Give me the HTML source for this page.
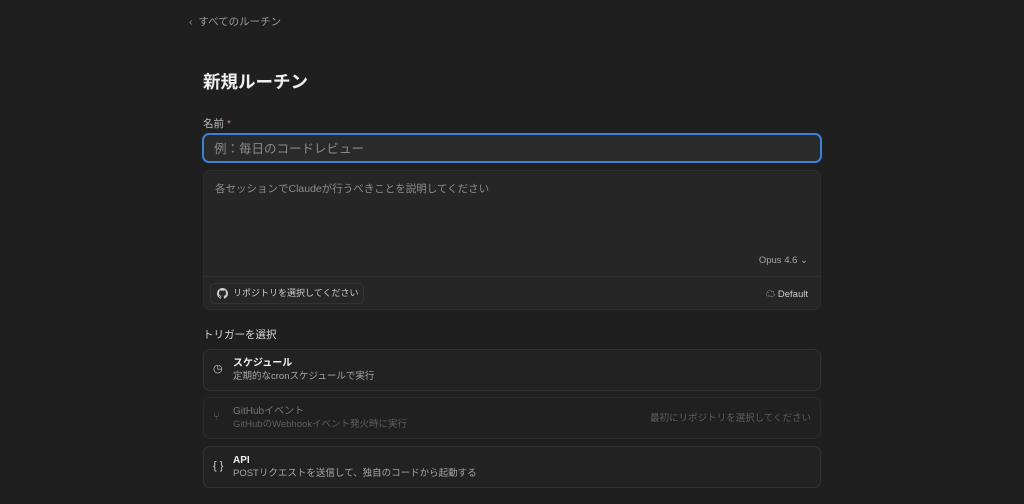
<!DOCTYPE html>
<html><head><meta charset="utf-8"><style>
*{box-sizing:border-box;margin:0;padding:0}
body{width:1024px;height:504px;background:#1f1f1f;font-family:"Liberation Sans","Noto Sans CJK JP",sans-serif;color:#e8e8e8;position:relative;overflow:hidden}
.a{position:absolute;white-space:nowrap;line-height:1.2}
.back{left:189px;top:16px;font-size:10.5px;color:#9a9a9a}
h1{position:absolute;left:203px;top:72px;font-size:17.5px;font-weight:bold;color:#f0f0f0;line-height:1.2}
.lbl{left:203px;top:118px;font-size:10.5px;color:#bdbdbd}
.inp{left:202px;top:133px;width:620px;height:30px;border:2px solid #3b7fd9;border-radius:7px;background:#2a2a2a;font-size:12.5px;color:#8a8a8a;padding:7px 10px}
.ta{left:203px;top:170px;width:618px;height:140px;border:1px solid #2e2e2e;border-radius:7px;background:#262626}
.ph{left:11px;top:12px;font-size:10.5px;color:#8d8d8d}
.div{left:0;top:105px;width:100%;border-top:1px solid #303030}
.card{left:203px;width:618px;height:42px;border:1px solid #333;border-radius:7px;background:#222}
.t{left:29px;top:8px;font-size:10px;font-weight:bold;color:#eee}
.s{left:29px;top:21px;font-size:9.5px;color:#a5a5a5}
.ic{left:9px;top:13px;font-size:11px;color:#cfcfcf}
</style></head><body>
<div class="a back">‹&nbsp;&nbsp;すべてのルーチン</div>
<h1>新規ルーチン</h1>
<div class="a lbl">名前 <span style="color:#e07a7a">*</span></div>
<div class="a inp">例：毎日のコードレビュー</div>
<div class="a ta">
 <div class="a ph">各セッションでClaudeが行うべきことを説明してください</div>
 <div class="a" style="right:12px;top:84px;font-size:9.5px;color:#a5a5a5">Opus 4.6 ⌄</div>
 <div class="a div"></div>
 <div class="a" style="left:6px;top:112px;width:154px;height:21px;border:1px solid #333;border-radius:5px;font-size:9px;color:#ccc;padding:4px 0 0 22px">
  <svg class="a" style="left:6px;top:4px" width="11" height="11" viewBox="0 0 16 16"><path fill="#ccc" d="M8 0C3.6 0 0 3.6 0 8c0 3.5 2.3 6.5 5.5 7.6.4.1.5-.2.5-.4v-1.4c-2.2.5-2.700-1-2.700-1-.4-.9-.9-1.2-.9-1.2-.7-.5.1-.5.1-.5.8.1 1.2.8 1.2.8.7 1.3 1.9.9 2.3.7.1-.5.3-.9.5-1.1-1.8-.2-3.6-.9-3.6-4 0-.9.3-1.6.8-2.1-.1-.2-.4-1 .1-2.1 0 0 .7-.2 2.2.8.6-.2 1.3-.3 2-.3s1.4.1 2 .3c1.5-1 2.2-.8 2.2-.8.4 1.1.2 1.9.1 2.1.5.6.8 1.3.8 2.1 0 3.1-1.9 3.7-3.6 3.9.3.3.5.8.5 1.5v2.2c0 .2.1.5.6.4C13.7 14.5 16 11.5 16 8c0-4.4-3.6-8-8-8z"/></svg>
  リポジトリを選択してください</div>
 <div class="a" style="right:12px;top:118px;font-size:9.5px;color:#ccc">☁ Default</div>
</div>
<div class="a" style="left:203px;top:329px;font-size:10.5px;color:#d8d8d8">トリガーを選択</div>
<div class="a card" style="top:349px"><div class="a ic">◷</div><div class="a t">スケジュール</div><div class="a s">定期的なcronスケジュールで実行</div></div>
<div class="a card" style="top:397px;border-color:#2a2a2a;background:#202020"><div class="a ic" style="color:#666">⑂</div><div class="a t" style="color:#777;font-weight:normal">GitHubイベント</div><div class="a s" style="color:#5e5e5e">GitHubのWebhookイベント発火時に実行</div><div class="a" style="right:9px;top:15px;font-size:9.5px;color:#5e5e5e">最初にリポジトリを選択してください</div></div>
<div class="a card" style="top:446px"><div class="a ic">{ }</div><div class="a t">API</div><div class="a s">POSTリクエストを送信して、独自のコードから起動する</div></div>
</body></html>
